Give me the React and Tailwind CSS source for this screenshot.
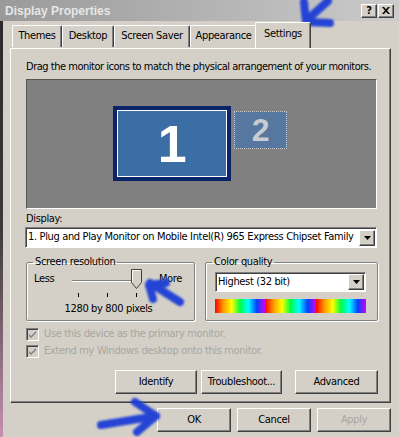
import React from 'react';

const font = "font-['DejaVu_Sans_Condensed','Liberation_Sans',Arial,sans-serif]";

const raised =
  'bg-[#d4d0c8] border border-t-white border-l-white border-b-[#404040] border-r-[#404040] shadow-[inset_-1px_-1px_0_#808080]';

const sunken =
  'border border-t-[#808080] border-l-[#808080] border-b-white border-r-white shadow-[inset_1px_1px_0_#404040]';

const Button = ({ children, className = '', disabled }) => (
  <div
    className={`${raised} flex items-center justify-center text-[11px] ${
      disabled ? 'text-[#a8a6a0]' : 'text-black'
    } ${className}`}
  >
    {children}
  </div>
);

const DropArrow = () => (
  <div className={`${raised} w-[16px] h-[16px] flex items-center justify-center shrink-0`}>
    <svg width="7" height="4" viewBox="0 0 7 4">
      <path d="M0 0h7L3.5 4z" fill="black" />
    </svg>
  </div>
);

const Select = ({ text, className = '' }) => (
  <div className={`${sunken} bg-white flex items-center pl-[2px] pr-[1px] ${className}`}>
    <span className="flex-1 text-[11px] whitespace-nowrap overflow-hidden">{text}</span>
    <DropArrow />
  </div>
);

const Tab = ({ label, width, selected }) => (
  <div
    className={`flex items-center justify-center text-[11px] border-l border-t border-r border-l-white border-t-white border-r-[#404040] rounded-t-[2px] shadow-[inset_-1px_0_0_#808080] ${
      selected ? 'h-[26px] -mx-[2px] z-10 bg-[#d4d0c8] pb-[3px] -mb-px' : 'h-[22px] mt-[3px]'
    }`}
    style={{ width }}
  >
    {label}
  </div>
);

const Checkbox = ({ label }) => (
  <div className="flex items-center h-[17px] gap-[5px]">
    <div className="w-[13px] h-[13px] border border-t-[#808080] border-l-[#808080] border-b-white border-r-white shadow-[inset_1px_1px_0_#404040] bg-[#d4d0c8] flex items-center justify-center">
      <svg width="9" height="9" viewBox="0 0 9 9">
        <path d="M1 4l2 2 5-5v2l-5 5-2-2z" fill="#808080" />
      </svg>
    </div>
    <span className="text-[11px] text-[#a8a6a0]">{label}</span>
  </div>
);

const Group = ({ title, className = '', children }) => (
  <fieldset
    className={`border border-[#808080] shadow-[1px_1px_0_white,inset_1px_1px_0_white] rounded-[2px] ${className}`}
  >
    <legend className="ml-[6px] px-[2px] text-[11px] leading-[14px]">{title}</legend>
    {children}
  </fieldset>
);

const App = () => {
  return (
    <div className={`${font} tracking-[-0.35px] relative w-[399px] h-[437px] overflow-hidden bg-[#d4d0c8] text-black`}>
      {/* title bar */}
      <div className="h-[21px] flex items-center pl-[5px] pr-[5px] bg-linear-to-r from-[#9a9a9a] to-[#cbcbcb]">
        <span className="flex-1 font-['Liberation_Sans',Arial,sans-serif] tracking-normal text-[12px] font-bold text-[#e6e6e6]">
          Display Properties
        </span>
        <div className={`${raised} w-[16px] h-[14px] flex items-center justify-center text-[11px] font-bold leading-none`}>?</div>
        <div className={`${raised} w-[16px] h-[14px] flex items-center justify-center ml-px`}>
          <svg width="8" height="7" viewBox="0 0 8 7">
            <path d="M0 0h2l2 2.3L6 0h2L5 3.5 8 7H6L4 4.7 2 7H0l3-3.5z" fill="black" />
          </svg>
        </div>
      </div>

      <div className="flex h-[416px]">
        <div className="w-[3px] bg-linear-to-b from-[#2a2a2a] via-[#3a3a3a] to-[#c890b0]" />

        <div className="flex-1 flex flex-col pl-[7px]">
          {/* tabs */}
          <div className="flex h-[26px] pl-[2px] mt-px">
            <Tab label="Themes" width={50} />
            <Tab label="Desktop" width={52} />
            <Tab label="Screen Saver" width={76} />
            <Tab label="Appearance" width={67} />
            <Tab label="Settings" width={56} selected />
          </div>

          {/* panel */}
          <div className="w-[381px] h-[355px] border border-t-white border-l-white border-b-[#404040] border-r-[#404040] shadow-[inset_-1px_-1px_0_#808080] flex flex-col pl-[15px]">
            <div className="mt-[11px] h-[14px] leading-[14px] text-[11px] tracking-[-0.48px] whitespace-nowrap">
              Drag the monitor icons to match the physical arrangement of your monitors.
            </div>

            <div className="mt-[5px] w-[351px] h-[130px] relative bg-[#808080] border border-t-[#555555] border-l-[#555555] border-b-white border-r-white">
              <div className="absolute left-[86px] top-[26px] w-[118px] h-[75px] bg-[#0a246a] p-[4px]">
                <div className="w-full h-full border border-white bg-[#3a6ea5] flex items-center justify-center">
                  <span className="font-['Liberation_Sans',Arial,sans-serif] text-[52px] font-bold text-white leading-none">1</span>
                </div>
              </div>
              <div className="absolute left-[207px] top-[31px] w-[53px] h-[38px] border border-dotted border-[#d0d0d0] bg-[#5677a0] flex items-center justify-center">
                <span className="font-['Liberation_Sans',Arial,sans-serif] text-[32px] font-bold text-[#c8ccd0] leading-none">2</span>
              </div>
            </div>

            <div className="mt-[3px] h-[14px] leading-[14px] text-[11px]">Display:</div>
            <Select
              className="mt-px -ml-px w-[352px] h-[21px]"
              text="1. Plug and Play Monitor on Mobile Intel(R) 965 Express Chipset Family"
            />

            <div className="flex mt-[7px] gap-[10px]">
              <Group title="Screen resolution" className="w-[169px] h-[66px]">
                <div className="flex items-start pl-[7px] pr-[12px] mt-[3px] text-[11px]">
                  <span className="leading-[14px]">Less</span>
                  <div className="relative w-[78px] h-[36px] ml-[16px]">
                    <div className="absolute left-[2px] top-[8px] w-[66px] h-[2px] border-t border-[#808080] border-b border-b-white" />
                    <svg className="absolute left-[61px] top-[-3px]" width="11" height="20" viewBox="0 0 11 20">
                      <path d="M0.5 0.5h10v13l-5 6-5-6z" fill="#d4d0c8" stroke="#404040" />
                      <path d="M1.5 13V1.5h8" fill="none" stroke="white" />
                    </svg>
                    <div className="absolute left-[8px] top-[21px] w-px h-[4px] bg-black" />
                    <div className="absolute left-[37px] top-[21px] w-px h-[4px] bg-black" />
                    <div className="absolute left-[66px] top-[21px] w-px h-[4px] bg-black" />
                  </div>
                  <span className="leading-[14px] ml-auto">More</span>
                </div>
                <div className="text-center text-[11px] leading-[14px] -mt-[6px] pr-[4px]">1280 by 800 pixels</div>
              </Group>

              <Group title="Color quality" className="w-[173px] h-[66px]">
                <div className="pl-[9px] pr-[11px] mt-[3px]">
                  <Select className="h-[20px]" text="Highest (32 bit)" />
                  <div className="mt-[7px] h-[14px] flex">
                    <div className="flex-1 bg-[linear-gradient(90deg,#ff0000,#ff9900,#ffff00,#00ff44,#00ffff,#0044ff,#cc00ff)]" />
                    <div className="flex-1 bg-[linear-gradient(90deg,#ff0000,#ff9900,#ffff00,#00ff44,#00ffff,#0044ff,#cc00ff)]" />
                    <div className="flex-1 bg-[linear-gradient(90deg,#ff0000,#ff9900,#ffff00,#00ff44,#00ffff,#0044ff,#cc00ff)]" />
                  </div>
                </div>
              </Group>
            </div>

            <div className="mt-[5px] flex flex-col">
              <Checkbox label="Use this device as the primary monitor." />
              <Checkbox label="Extend my Windows desktop onto this monitor." />
            </div>

            <div className="mt-[10px] flex pl-[89px]">
              <Button className="w-[82px] h-[24px]">Identify</Button>
              <Button className="w-[81px] h-[24px] ml-[4px]">Troubleshoot...</Button>
              <Button className="w-[83px] h-[24px] ml-[13px]">Advanced</Button>
            </div>
          </div>

          {/* bottom buttons */}
          <div className="flex mt-[5px] pl-[147px]">
            <Button className="w-[74px] h-[24px]">OK</Button>
            <Button className="w-[74px] h-[24px] ml-[6px]">Cancel</Button>
            <Button className="w-[74px] h-[24px] ml-[6px]" disabled>
              Apply
            </Button>
          </div>
        </div>
      </div>

      {/* blue marker annotations */}
      <svg className="absolute inset-0 pointer-events-none" width="399" height="437" viewBox="0 0 399 437">
        <defs>
          <filter id="soft">
            <feGaussianBlur stdDeviation="0.9" />
          </filter>
        </defs>
        <g stroke="#1c3ed6" strokeWidth="8" strokeLinecap="round" strokeLinejoin="round" fill="none" filter="url(#soft)" opacity="0.95">
          <path d="M304 2 L306 22 L330 23" />
          <path d="M308 19 L328 1" />
          <path d="M150 283 L180 302" />
          <path d="M149 285 L166 283" />
          <path d="M149 285 L153 299" />
          <path d="M101 425 L156 416" />
          <path d="M156 416 L135 402" />
          <path d="M156 416 L137 432" />
        </g>
      </svg>
    </div>
  );
};

export default App;
